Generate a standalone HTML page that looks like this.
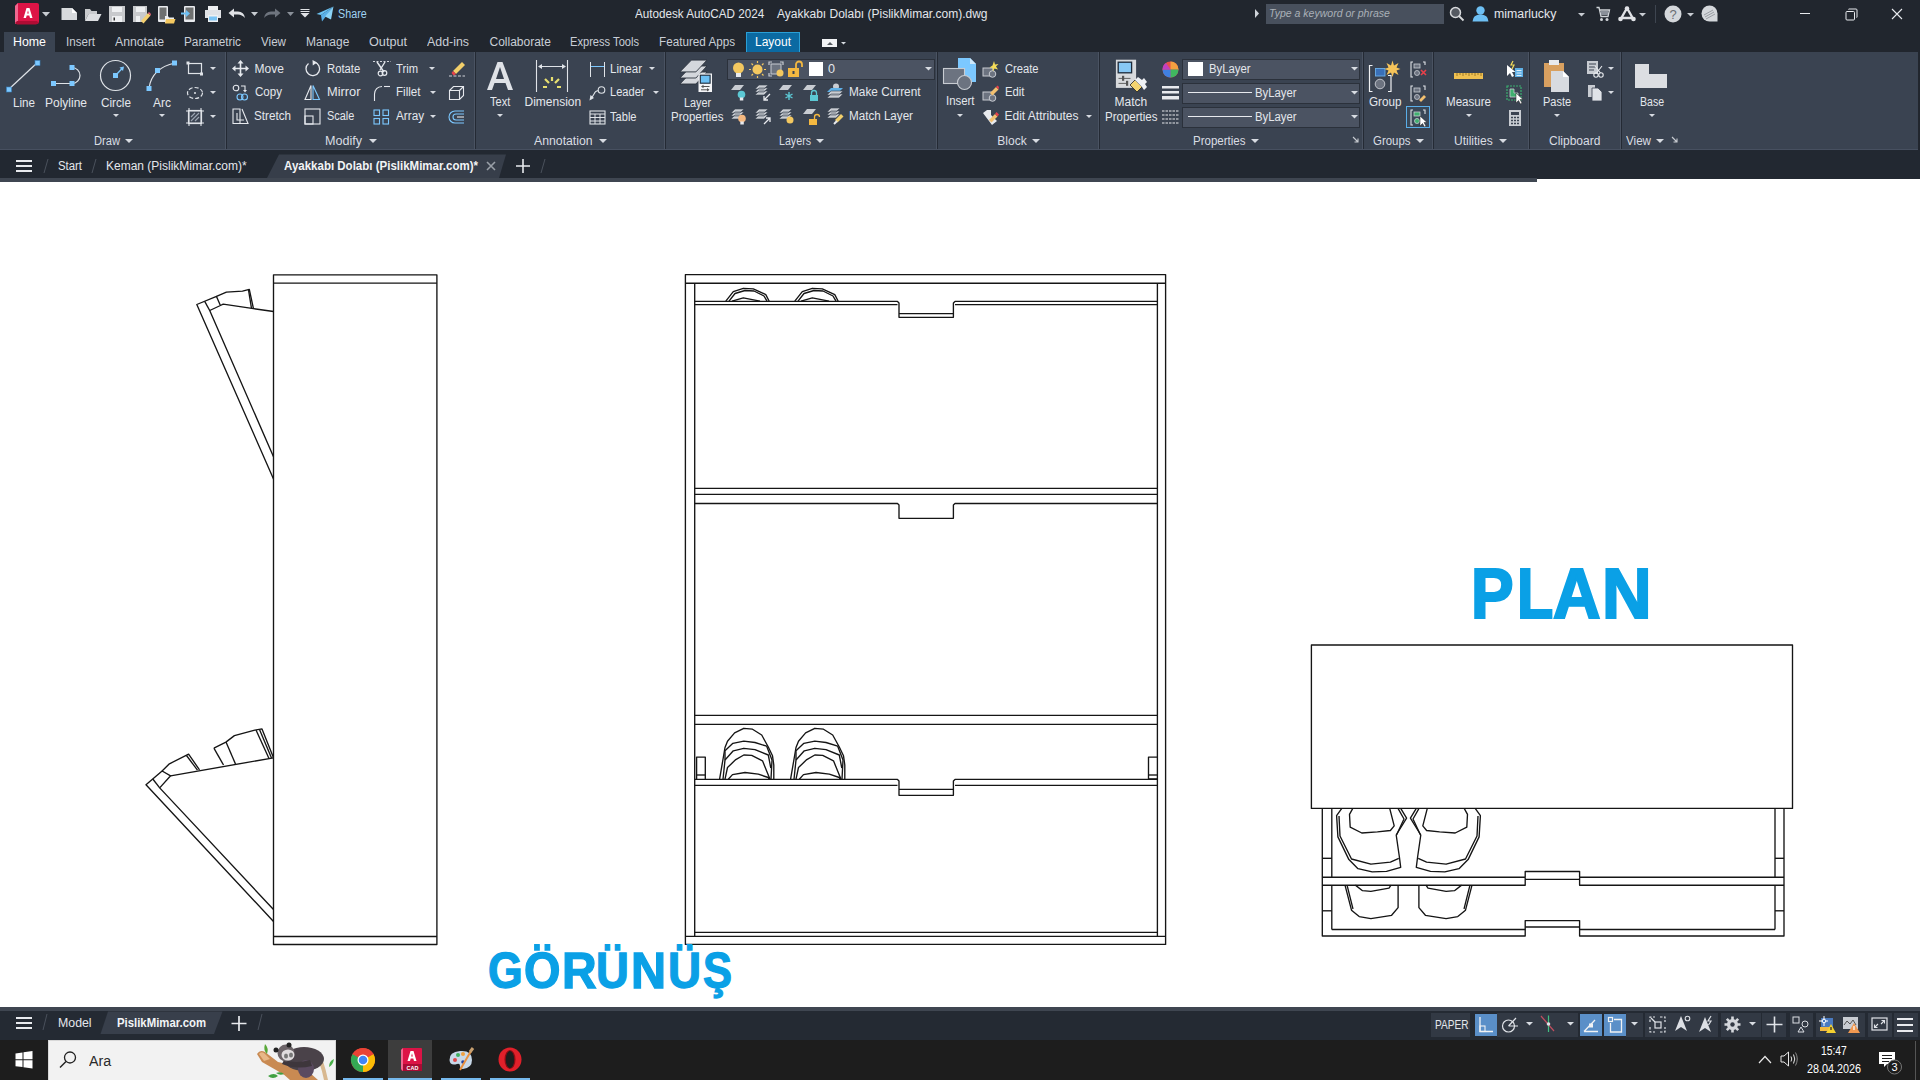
<!DOCTYPE html>
<html><head><meta charset="utf-8">
<style>
*{margin:0;padding:0;box-sizing:border-box}
html,body{width:1920px;height:1080px;overflow:hidden;background:#fff;font-family:"Liberation Sans",sans-serif}
.a{position:absolute}
.t{position:absolute;color:#e6e9ee;font-size:12px;white-space:nowrap;line-height:1}
svg{overflow:visible}
</style></head><body>

<div class="a" style="left:0;top:0;width:1920px;height:52px;background:#21262e"></div>
<div class="a" style="left:0;top:52px;width:1920px;height:98px;background:#3a4351"></div>
<div class="a" style="left:0;top:150px;width:1920px;height:28px;background:#222831"></div>
<div class="a" style="left:0;top:178px;width:1537px;height:4px;background:#3f4651"></div>
<div class="a" style="left:1537px;top:178px;width:383px;height:1px;background:#222831"></div>
<div class="a" style="left:0;top:1007px;width:1920px;height:33px;background:#222831"></div>
<div class="a" style="left:0;top:1007px;width:1920px;height:4px;background:#3f4651"></div>
<div class="a" style="left:0;top:1040px;width:1920px;height:40px;background:#1c1c1c"></div>

<svg class="a" style="left:0;top:0" width="1920" height="1080" viewBox="0 0 1920 1080"><g fill="none" stroke="#151515" stroke-width="1.35" stroke-linejoin="round"><path d="M273.5,274.8 L436.9,274.8 L436.9,944.5 L273.5,944.5 Z"/>
<path d="M273.5,283.1 L436.9,283.1"/>
<path d="M273.5,936.5 L436.9,936.5"/>
<path d="M273.5,478.9 L196.8,304.5 L216.5,296.4 L220.4,305.5 L209.7,310.5 L273.5,456.7"/>
<path d="M204.7,301.4 L209.7,310.5"/>
<path d="M216.5,296.4 L226.4,292.2 L242.5,291.2 L249.3,289.4 L253.4,308.4"/>
<path d="M220.4,305.5 L223.2,304.2 L251.9,308.4 L273.5,311.5"/>
<path d="M248.5,290 L251.5,308.4"/>
<path d="M273.5,921.5 L146.0,784.8 L162.1,771.0 L170.6,775.8 L159.7,787.9 L273.5,909.5"/>
<path d="M152.8,779 L159.7,787.9"/>
<path d="M162.1,771.0 L169.4,763.8 L188.6,754.2 L199.5,769.8"/>
<path d="M170.6,775.8 L273.5,757.8"/>
<path d="M186.5,755.5 L197.5,770.2"/>
<path d="M213.9,748.2 L223.5,765.0"/>
<path d="M213.9,748.2 L225.9,742.1 L234.4,735.6 L254.8,730.1 L262.0,728.9 L273.5,757.8"/>
<path d="M226,742 L235.5,764"/>
<path d="M256,730 L269,758.5"/>
<path d="M259.5,729.5 L271.5,758"/>
<path d="M685.4,274.6 L1165.6,274.6 L1165.6,944.4 L685.4,944.4 Z"/>
<path d="M685.4,283.2 L1165.6,283.2"/>
<path d="M694.7,283.2 L694.7,936.4"/>
<path d="M1157.4,283.2 L1157.4,936.4"/>
<path d="M685.4,936.4 L1165.6,936.4"/>
<path d="M694.7,301.4 L897.5,301.4 L899.0,302.9 L899.0,317.3 L953.4,317.3 L953.4,302.9 L955.0,301.4 L1157.4,301.4"/>
<path d="M694.7,304.59999999999997 L897.5,304.59999999999997"/>
<path d="M955,304.59999999999997 L1157.4,304.59999999999997"/>
<path d="M899,313.6 L953.4,313.6"/>
<path d="M694.7,488.4 L1157.4,488.4"/>
<path d="M694.7,494.3 L1157.4,494.3"/>
<path d="M694.7,503.5 L897.5,503.5 L899.0,505.0 L899.0,518.3 L953.4,518.3 L953.4,505.0 L955.0,503.5 L1157.4,503.5"/>
<path d="M694.7,715.4 L1157.4,715.4"/>
<path d="M694.7,724.4 L1157.4,724.4"/>
<path d="M694.7,779.4 L897.5,779.4 L899.0,780.9 L899.0,795.3 L953.4,795.3 L953.4,780.9 L955.0,779.4 L1157.4,779.4"/>
<path d="M694.7,785.4 L897.5,785.4"/>
<path d="M955,785.4 L1157.4,785.4"/>
<path d="M899,789.4 L953.4,789.4"/>
<path d="M694.7,932.4 L1157.4,932.4"/>
<path d="M696.6,779.0 L696.6,757.1 L705.3,757.1 L705.3,779.0"/>
<path d="M696.6,775 L705.3,775"/>
<path d="M1157.4,779.0 L1148.5,779.0 L1148.5,757.1 L1157.4,757.1"/>
<path d="M1148.5,775 L1157.4,775"/>
<path d="M719.6,779.2 L725.0,747.5 L727.5,741.2 L734.6,732.9 L743.8,728.3 L752.5,729.2 L761.7,735.0 L768.3,747.0 L772.5,755.8 L773.8,765.0 L773.8,779.2"/>
<path d="M723.0,779.2 L725.0,760.0 L725.0,750.8 L732.9,743.3 L743.8,741.2 L755.0,742.5 L766.7,746.2 L772.0,760.0 L771.0,779.2"/>
<path d="M725.0,760.0 L733.3,750.8 L743.8,748.3 L755.0,749.6 L768.3,755.0 L770.8,768.0"/>
<path d="M725.0,779.2 L727.5,767.5 L735.8,759.6 L743.8,755.0 L751.7,755.4 L762.5,760.8 L770.0,779.2"/>
<path d="M728.3,779.2 L732.5,774.6 L745.0,772.5 L758.3,774.2 L768.3,777.5 L769.0,779.2"/>
<path d="M790.6,779.2 L796.0,747.5 L798.5,741.2 L805.6,732.9 L814.8,728.3 L823.5,729.2 L832.7,735.0 L839.3,747.0 L843.5,755.8 L844.8,765.0 L844.8,779.2"/>
<path d="M794.0,779.2 L796.0,760.0 L796.0,750.8 L803.9,743.3 L814.8,741.2 L826.0,742.5 L837.7,746.2 L843.0,760.0 L842.0,779.2"/>
<path d="M796.0,760.0 L804.3,750.8 L814.8,748.3 L826.0,749.6 L839.3,755.0 L841.8,768.0"/>
<path d="M796.0,779.2 L798.5,767.5 L806.8,759.6 L814.8,755.0 L822.7,755.4 L833.5,760.8 L841.0,779.2"/>
<path d="M799.3,779.2 L803.5,774.6 L816.0,772.5 L829.3,774.2 L839.3,777.5 L840.0,779.2"/>
<path d="M725.8,301.2 L733.3,291.7 L743.3,288.3 L753.3,288.8 L765.8,294.6 L769.2,301.2"/>
<path d="M729.0,301.2 L735.0,293.5 L745.0,290.5 L754.0,291.0 L764.0,296.0 L767.0,301.2"/>
<path d="M732.0,301.2 L743.3,297.9 L760.0,301.2"/>
<path d="M794.8,301.2 L802.3,291.7 L812.3,288.3 L822.3,288.8 L834.8,294.6 L838.2,301.2"/>
<path d="M798.0,301.2 L804.0,293.5 L814.0,290.5 L823.0,291.0 L833.0,296.0 L836.0,301.2"/>
<path d="M801.0,301.2 L812.3,297.9 L829.0,301.2"/>
<path d="M1311.4,645.0 L1792.5,645.0 L1792.5,808.4 L1311.4,808.4 Z"/>
<path d="M1322.3,808.4 L1322.3,936.0 L1525.2,936.0 L1525.2,920.6 L1579.6,920.6 L1579.6,936.0 L1784.0,936.0 L1784.0,808.4"/>
<path d="M1331.8,808.4 L1331.8,877.4"/>
<path d="M1331.8,885.1 L1331.8,929.6"/>
<path d="M1775,808.4 L1775,877.4"/>
<path d="M1775,885.1 L1775,929.6"/>
<path d="M1322.3,858.3 L1331.8,858.3"/>
<path d="M1322.3,910.8 L1331.8,910.8"/>
<path d="M1775,858.3 L1784,858.3"/>
<path d="M1775,910.8 L1784,910.8"/>
<path d="M1322.3,877.2 L1525.2,877.2 L1525.2,871.5 L1579.6,871.5 L1579.6,877.2 L1784.0,877.2"/>
<path d="M1322.3,885.2 L1525.2,885.2 L1525.2,877.7"/>
<path d="M1579.6,877.7 L1579.6,885.2 L1784.0,885.2"/>
<path d="M1525.2,879.4 L1579.6,879.4"/>
<path d="M1331.8,929.5 L1525.2,929.5"/>
<path d="M1579.6,929.5 L1775.0,929.5"/>
<path d="M1525.2,927 L1579.6,927"/>
<path d="M1341.8,808.4 L1336.6,815.6 L1337.9,836.9 L1348.9,859.6 L1358.0,868.7 L1372.2,871.9 L1386.5,871.3 L1400.7,867.4 L1399.4,857.0 L1396.2,835.0 L1406.6,818.1 L1400.7,808.4"/>
<path d="M1339.0,816.0 L1340.0,836.0 L1351.5,859.0 L1370.9,864.2 L1390.4,862.2 L1398.8,858.3"/>
<path d="M1352.8,808.4 L1349.5,814.3 L1350.2,827.2 L1361.8,833.0 L1377.4,831.8 L1390.4,830.5 L1394.2,825.9 L1389.7,808.4"/>
<path d="M1396.5,835.0 L1404.0,819.0 L1398.0,808.4"/>
<path d="M1345.0,885.1 L1351.5,910.2 L1359.2,916.6 L1370.9,918.6 L1391.6,915.3 L1398.1,907.6 L1398.1,885.1"/>
<path d="M1347.0,885.1 L1353.0,909.0"/>
<path d="M1355.4,885.1 L1362.5,890.7 L1370.9,891.4 L1389.0,888.1 L1391.0,885.1"/>
<path d="M1475.2,808.4 L1480.4,815.6 L1479.1,836.9 L1468.1,859.6 L1459.0,868.7 L1444.8,871.9 L1430.5,871.3 L1416.3,867.4 L1417.6,857.0 L1420.8,835.0 L1410.4,818.1 L1416.3,808.4"/>
<path d="M1478.0,816.0 L1477.0,836.0 L1465.5,859.0 L1446.1,864.2 L1426.6,862.2 L1418.2,858.3"/>
<path d="M1464.2,808.4 L1467.5,814.3 L1466.8,827.2 L1455.2,833.0 L1439.6,831.8 L1426.6,830.5 L1422.8,825.9 L1427.3,808.4"/>
<path d="M1420.5,835.0 L1413.0,819.0 L1419.0,808.4"/>
<path d="M1472.0,885.1 L1465.5,910.2 L1457.8,916.6 L1446.1,918.6 L1425.4,915.3 L1418.9,907.6 L1418.9,885.1"/>
<path d="M1470.0,885.1 L1464.0,909.0"/>
<path d="M1461.6,885.1 L1454.5,890.7 L1446.1,891.4 L1428.0,888.1 L1426.0,885.1"/></g></svg>
<div class="a" style="left:1470.95px;top:560.19px;font-weight:bold;font-size:69.71px;line-height:1;color:#0aa0e6;-webkit-text-stroke:2.2px #0aa0e6;transform:scaleX(0.916);transform-origin:0 0">P</div>
<div class="a" style="left:1516.64px;top:560.19px;font-weight:bold;font-size:69.71px;line-height:1;color:#0aa0e6;-webkit-text-stroke:2.2px #0aa0e6;transform:scaleX(0.852);transform-origin:0 0">L</div>
<div class="a" style="left:1553.21px;top:560.19px;font-weight:bold;font-size:69.71px;line-height:1;color:#0aa0e6;-webkit-text-stroke:2.2px #0aa0e6;transform:scaleX(0.943);transform-origin:0 0">A</div>
<div class="a" style="left:1601.94px;top:560.19px;font-weight:bold;font-size:69.71px;line-height:1;color:#0aa0e6;-webkit-text-stroke:2.2px #0aa0e6;transform:scaleX(0.985);transform-origin:0 0">N</div>
<div class="a" style="left:487.62px;top:947.42px;font-weight:bold;font-size:49.71px;line-height:1;color:#0aa0e6;-webkit-text-stroke:1.3px #0aa0e6;transform:scaleX(0.896);transform-origin:0 0">G</div>
<div class="a" style="left:523.67px;top:947.42px;font-weight:bold;font-size:49.71px;line-height:1;color:#0aa0e6;-webkit-text-stroke:1.3px #0aa0e6;transform:scaleX(0.944);transform-origin:0 0">Ö</div>
<div class="a" style="left:561.73px;top:947.42px;font-weight:bold;font-size:49.71px;line-height:1;color:#0aa0e6;-webkit-text-stroke:1.3px #0aa0e6;transform:scaleX(0.966);transform-origin:0 0">R</div>
<div class="a" style="left:596.12px;top:947.42px;font-weight:bold;font-size:49.71px;line-height:1;color:#0aa0e6;-webkit-text-stroke:1.3px #0aa0e6;transform:scaleX(0.915);transform-origin:0 0">Ü</div>
<div class="a" style="left:631.49px;top:947.42px;font-weight:bold;font-size:49.71px;line-height:1;color:#0aa0e6;-webkit-text-stroke:1.3px #0aa0e6;transform:scaleX(0.979);transform-origin:0 0">N</div>
<div class="a" style="left:668.10px;top:947.42px;font-weight:bold;font-size:49.71px;line-height:1;color:#0aa0e6;-webkit-text-stroke:1.3px #0aa0e6;transform:scaleX(0.922);transform-origin:0 0">Ü</div>
<div class="a" style="left:703.35px;top:947.42px;font-weight:bold;font-size:49.71px;line-height:1;color:#0aa0e6;-webkit-text-stroke:1.3px #0aa0e6;transform:scaleX(0.875);transform-origin:0 0">Ş</div>
<div class="t" style="left:635.4px;top:7.54px;font-size:12px;color:#e4e7ec;transform:scaleX(0.973);transform-origin:0 0;">Autodesk AutoCAD 2024</div>
<div class="t" style="left:777.0px;top:7.54px;font-size:12px;color:#e4e7ec;">Ayakkabı Dolabı (PislikMimar.com).dwg</div>
<svg class="a" style="left:1254px;top:9px;" width="6" height="10" viewBox="0 0 6 10"><path d="M1,0 L5,4.5 L1,9 Z" fill="#d0d4da"/></svg>
<div class="a" style="left:1266px;top:4px;width:178px;height:20px;background:#48505d;"></div>
<div class="t" style="left:1268.5px;top:8.19px;font-size:11px;color:#aab0b8;font-style:italic;transform:scaleX(0.957);transform-origin:0 0;">Type a keyword or phrase</div>
<div class="a" style="left:4px;top:32px;width:51px;height:20px;background:#3a4351;"></div>
<div class="t" style="left:13.0px;top:35.84px;font-size:12px;color:#ffffff;transform:scaleX(1.031);transform-origin:0 0;">Home</div>
<div class="t" style="left:66.0px;top:35.84px;font-size:12px;color:#c9ced6;transform:scaleX(0.967);transform-origin:0 0;">Insert</div>
<div class="t" style="left:115.0px;top:35.84px;font-size:12px;color:#c9ced6;transform:scaleX(1.021);transform-origin:0 0;">Annotate</div>
<div class="t" style="left:184.0px;top:35.84px;font-size:12px;color:#c9ced6;transform:scaleX(0.982);transform-origin:0 0;">Parametric</div>
<div class="t" style="left:261.0px;top:35.84px;font-size:12px;color:#c9ced6;transform:scaleX(0.969);transform-origin:0 0;">View</div>
<div class="t" style="left:306.0px;top:35.84px;font-size:12px;color:#c9ced6;">Manage</div>
<div class="t" style="left:369.0px;top:35.84px;font-size:12px;color:#c9ced6;transform:scaleX(1.056);transform-origin:0 0;">Output</div>
<div class="t" style="left:427.0px;top:35.84px;font-size:12px;color:#c9ced6;transform:scaleX(1.032);transform-origin:0 0;">Add-ins</div>
<div class="t" style="left:489.5px;top:35.84px;font-size:12px;color:#c9ced6;">Collaborate</div>
<div class="t" style="left:570.0px;top:35.84px;font-size:12px;color:#c9ced6;transform:scaleX(0.927);transform-origin:0 0;">Express Tools</div>
<div class="t" style="left:659.0px;top:35.84px;font-size:12px;color:#c9ced6;transform:scaleX(0.974);transform-origin:0 0;">Featured Apps</div>
<div class="a" style="left:746px;top:32px;width:54px;height:20px;background:#0b6aa2;border:1px solid #2a9fd6;border-bottom:none;"></div>
<div class="t" style="left:755.0px;top:35.84px;font-size:12px;color:#ffffff;">Layout</div>
<div class="a" style="left:822px;top:39px;width:15px;height:8px;background:#f2f3f5;"></div>
<svg class="a" style="left:826.5px;top:41.5px;" width="6" height="3" viewBox="0 0 6 3"><path d="M0,3 L3,0 L6,3Z" fill="#555a60"/></svg>
<svg class="a" style="left:841.0px;top:41.5px" width="5.0" height="3.0" viewBox="0 0 5.0 3.0"><path d="M0,0 L5.0,0 L2.5,2.5 Z" fill="#d8dce2"/></svg>
<div class="a" style="left:225px;top:52px;width:1px;height:98px;background:#4a5362;"></div>
<div class="a" style="left:226px;top:52px;width:1px;height:98px;background:#242a34;"></div>
<div class="a" style="left:474px;top:52px;width:1px;height:98px;background:#4a5362;"></div>
<div class="a" style="left:475px;top:52px;width:1px;height:98px;background:#242a34;"></div>
<div class="a" style="left:664px;top:52px;width:1px;height:98px;background:#4a5362;"></div>
<div class="a" style="left:665px;top:52px;width:1px;height:98px;background:#242a34;"></div>
<div class="a" style="left:936px;top:52px;width:1px;height:98px;background:#4a5362;"></div>
<div class="a" style="left:937px;top:52px;width:1px;height:98px;background:#242a34;"></div>
<div class="a" style="left:1098px;top:52px;width:1px;height:98px;background:#4a5362;"></div>
<div class="a" style="left:1099px;top:52px;width:1px;height:98px;background:#242a34;"></div>
<div class="a" style="left:1362px;top:52px;width:1px;height:98px;background:#4a5362;"></div>
<div class="a" style="left:1363px;top:52px;width:1px;height:98px;background:#242a34;"></div>
<div class="a" style="left:1432px;top:52px;width:1px;height:98px;background:#4a5362;"></div>
<div class="a" style="left:1433px;top:52px;width:1px;height:98px;background:#242a34;"></div>
<div class="a" style="left:1528px;top:52px;width:1px;height:98px;background:#4a5362;"></div>
<div class="a" style="left:1529px;top:52px;width:1px;height:98px;background:#242a34;"></div>
<div class="a" style="left:1620px;top:52px;width:1px;height:98px;background:#4a5362;"></div>
<div class="a" style="left:1621px;top:52px;width:1px;height:98px;background:#242a34;"></div>
<div class="a" style="left:0px;top:149px;width:1920px;height:1px;background:#475060;"></div>
<div class="a" style="left:1918px;top:52px;width:2px;height:98px;background:#21262e;"></div>
<div class="t" style="left:93.8px;top:135.04px;font-size:12px;color:#d9dde3;transform:scaleX(0.928);transform-origin:0 0;">Draw</div>
<svg class="a" style="left:125.0px;top:139.0px" width="8" height="4.5" viewBox="0 0 8 4.5"><path d="M0,0 L8,0 L4,4 Z" fill="#d8dce2"/></svg>
<div class="t" style="left:325.3px;top:135.04px;font-size:12px;color:#d9dde3;transform:scaleX(1.047);transform-origin:0 0;">Modify</div>
<svg class="a" style="left:369.0px;top:139.0px" width="8" height="4.5" viewBox="0 0 8 4.5"><path d="M0,0 L8,0 L4,4 Z" fill="#d8dce2"/></svg>
<div class="t" style="left:533.6px;top:135.04px;font-size:12px;color:#d9dde3;transform:scaleX(1.022);transform-origin:0 0;">Annotation</div>
<svg class="a" style="left:599.0px;top:139.0px" width="8" height="4.5" viewBox="0 0 8 4.5"><path d="M0,0 L8,0 L4,4 Z" fill="#d8dce2"/></svg>
<div class="t" style="left:778.5px;top:135.04px;font-size:12px;color:#d9dde3;transform:scaleX(0.889);transform-origin:0 0;">Layers</div>
<svg class="a" style="left:816.0px;top:139.0px" width="8" height="4.5" viewBox="0 0 8 4.5"><path d="M0,0 L8,0 L4,4 Z" fill="#d8dce2"/></svg>
<div class="t" style="left:997.3px;top:135.04px;font-size:12px;color:#d9dde3;">Block</div>
<svg class="a" style="left:1032.0px;top:139.0px" width="8" height="4.5" viewBox="0 0 8 4.5"><path d="M0,0 L8,0 L4,4 Z" fill="#d8dce2"/></svg>
<div class="t" style="left:1192.5px;top:135.04px;font-size:12px;color:#d9dde3;transform:scaleX(0.960);transform-origin:0 0;">Properties</div>
<svg class="a" style="left:1251.0px;top:139.0px" width="8" height="4.5" viewBox="0 0 8 4.5"><path d="M0,0 L8,0 L4,4 Z" fill="#d8dce2"/></svg>
<div class="t" style="left:1372.5px;top:135.04px;font-size:12px;color:#d9dde3;transform:scaleX(0.953);transform-origin:0 0;">Groups</div>
<svg class="a" style="left:1416.0px;top:139.0px" width="8" height="4.5" viewBox="0 0 8 4.5"><path d="M0,0 L8,0 L4,4 Z" fill="#d8dce2"/></svg>
<div class="t" style="left:1454.0px;top:135.04px;font-size:12px;color:#d9dde3;">Utilities</div>
<svg class="a" style="left:1499.0px;top:139.0px" width="8" height="4.5" viewBox="0 0 8 4.5"><path d="M0,0 L8,0 L4,4 Z" fill="#d8dce2"/></svg>
<div class="t" style="left:1549.0px;top:135.04px;font-size:12px;color:#d9dde3;">Clipboard</div>
<div class="t" style="left:1626.0px;top:135.04px;font-size:12px;color:#d9dde3;transform:scaleX(0.969);transform-origin:0 0;">View</div>
<svg class="a" style="left:1656.0px;top:139.0px" width="8" height="4.5" viewBox="0 0 8 4.5"><path d="M0,0 L8,0 L4,4 Z" fill="#d8dce2"/></svg>
<svg class="a" style="left:1352px;top:136px;" width="7" height="7" viewBox="0 0 7 7"><path d="M1,1 L6,6 M6,2.5 L6,6 L2.5,6" stroke="#c8ccd2" stroke-width="1.1" fill="none"/></svg>
<svg class="a" style="left:1671px;top:136px;" width="7" height="7" viewBox="0 0 7 7"><path d="M1,1 L6,6 M6,2.5 L6,6 L2.5,6" stroke="#c8ccd2" stroke-width="1.1" fill="none"/></svg>
<div class="t" style="left:12.5px;top:96.74px;font-size:12px;color:#e4e7ec;transform:scaleX(0.970);transform-origin:0 0;">Line</div>
<div class="t" style="left:45.0px;top:96.74px;font-size:12px;color:#e4e7ec;">Polyline</div>
<div class="t" style="left:101.0px;top:96.74px;font-size:12px;color:#e4e7ec;transform:scaleX(0.978);transform-origin:0 0;">Circle</div>
<div class="t" style="left:153.0px;top:96.74px;font-size:12px;color:#e4e7ec;">Arc</div>
<svg class="a" style="left:112.5px;top:113.5px" width="6" height="3.5" viewBox="0 0 6 3.5"><path d="M0,0 L6,0 L3,3 Z" fill="#d8dce2"/></svg>
<svg class="a" style="left:158.5px;top:113.5px" width="6" height="3.5" viewBox="0 0 6 3.5"><path d="M0,0 L6,0 L3,3 Z" fill="#d8dce2"/></svg>
<svg class="a" style="left:5px;top:59px;" width="36" height="34" viewBox="0 0 36 34"><path d="M3.5,30.5 L32.5,3.5" stroke="#dfe3e8" stroke-width="1.2"/><rect x="1.5" y="28" width="5" height="5" fill="#7cc8ff" stroke="#3a82c0" stroke-width="0.6"/><rect x="30" y="1.5" width="5" height="5" fill="#7cc8ff" stroke="#3a82c0" stroke-width="0.6"/></svg>
<svg class="a" style="left:48px;top:64px;" width="38" height="24" viewBox="0 0 38 24"><path d="M6.5,19.5 L24,19.5 M24,19.5 A8,8 0 0 0 24,3.5" stroke="#dfe3e8" stroke-width="1.2" fill="none"/><rect x="3" y="17" width="5" height="5" fill="#7cc8ff"/><rect x="21.5" y="17" width="5" height="5" fill="#7cc8ff"/><rect x="21.5" y="1" width="5" height="5" fill="#7cc8ff"/></svg>
<svg class="a" style="left:99px;top:59px;" width="34" height="34" viewBox="0 0 34 34"><circle cx="16.5" cy="16.5" r="15" stroke="#dfe3e8" stroke-width="1.2" fill="none"/><path d="M16.5,16.5 L24,8.5" stroke="#7cc8ff" stroke-width="1.3"/><path d="M20.5,8.5 L25,7.5 L24,12Z" fill="#7cc8ff"/><rect x="14" y="14" width="5" height="5" fill="#7cc8ff"/></svg>
<svg class="a" style="left:146px;top:60px;" width="34" height="32" viewBox="0 0 34 32"><path d="M3,28 Q6,8 29,3" stroke="#dfe3e8" stroke-width="1.2" fill="none"/><rect x="0.5" y="26" width="5" height="5" fill="#7cc8ff"/><rect x="9" y="8" width="5" height="5" fill="#7cc8ff"/><rect x="26" y="0.5" width="5" height="5" fill="#7cc8ff"/></svg>
<svg class="a" style="left:186px;top:61px;" width="18" height="16" viewBox="0 0 18 16"><rect x="2.5" y="2.5" width="13" height="10" stroke="#dfe3e8" stroke-width="1.2" fill="none"/><rect x="0.5" y="0.5" width="3" height="3" fill="#dfe3e8"/><rect x="14" y="11.5" width="3" height="3" fill="#dfe3e8"/></svg>
<svg class="a" style="left:209.5px;top:66.5px" width="6" height="3.5" viewBox="0 0 6 3.5"><path d="M0,0 L6,0 L3,3 Z" fill="#d8dce2"/></svg>
<svg class="a" style="left:186px;top:86px;" width="18" height="14" viewBox="0 0 18 14"><ellipse cx="9" cy="7" rx="7.5" ry="5.5" stroke="#dfe3e8" stroke-width="1.2" fill="none" stroke-dasharray="4 2"/><circle cx="9" cy="7" r="1" fill="#dfe3e8"/></svg>
<svg class="a" style="left:209.5px;top:90.5px" width="6" height="3.5" viewBox="0 0 6 3.5"><path d="M0,0 L6,0 L3,3 Z" fill="#d8dce2"/></svg>
<svg class="a" style="left:186px;top:108px;" width="18" height="18" viewBox="0 0 18 18"><rect x="2.5" y="2.5" width="13" height="13" stroke="#dfe3e8" stroke-width="1.2" fill="none"/><path d="M0,3 L18,3 M0,15 L18,15 M3,0 L3,18 M15,0 L15,18" stroke="#dfe3e8" stroke-width="1.1"/><path d="M5,13 L13,5 M5,9 L9,5 M9,13 L13,9" stroke="#9aa3b0" stroke-width="1.2"/></svg>
<svg class="a" style="left:209.5px;top:114.5px" width="6" height="3.5" viewBox="0 0 6 3.5"><path d="M0,0 L6,0 L3,3 Z" fill="#d8dce2"/></svg>
<div class="t" style="left:254.5px;top:62.84px;font-size:12px;color:#e4e7ec;">Move</div>
<div class="t" style="left:326.6px;top:62.84px;font-size:12px;color:#e4e7ec;transform:scaleX(0.939);transform-origin:0 0;">Rotate</div>
<div class="t" style="left:395.6px;top:62.84px;font-size:12px;color:#e4e7ec;transform:scaleX(0.934);transform-origin:0 0;">Trim</div>
<div class="t" style="left:254.5px;top:86.34px;font-size:12px;color:#e4e7ec;transform:scaleX(0.964);transform-origin:0 0;">Copy</div>
<div class="t" style="left:326.6px;top:86.34px;font-size:12px;color:#e4e7ec;transform:scaleX(1.069);transform-origin:0 0;">Mirror</div>
<div class="t" style="left:395.6px;top:86.34px;font-size:12px;color:#e4e7ec;transform:scaleX(0.967);transform-origin:0 0;">Fillet</div>
<div class="t" style="left:254.0px;top:110.24px;font-size:12px;color:#e4e7ec;transform:scaleX(0.974);transform-origin:0 0;">Stretch</div>
<div class="t" style="left:326.6px;top:110.24px;font-size:12px;color:#e4e7ec;transform:scaleX(0.906);transform-origin:0 0;">Scale</div>
<div class="t" style="left:395.6px;top:110.24px;font-size:12px;color:#e4e7ec;transform:scaleX(0.977);transform-origin:0 0;">Array</div>
<svg class="a" style="left:428.5px;top:66.5px" width="6" height="3.5" viewBox="0 0 6 3.5"><path d="M0,0 L6,0 L3,3 Z" fill="#d8dce2"/></svg>
<svg class="a" style="left:430.0px;top:90.5px" width="6" height="3.5" viewBox="0 0 6 3.5"><path d="M0,0 L6,0 L3,3 Z" fill="#d8dce2"/></svg>
<svg class="a" style="left:430.0px;top:114.5px" width="6" height="3.5" viewBox="0 0 6 3.5"><path d="M0,0 L6,0 L3,3 Z" fill="#d8dce2"/></svg>
<svg class="a" style="left:232px;top:60px;" width="17" height="17" viewBox="0 0 17 17"><path d="M8.5,2 L8.5,15 M2,8.5 L15,8.5" stroke="#e6e9ee" stroke-width="1.6"/><path d="M8.5,0 L11.5,3.5 L5.5,3.5Z M8.5,17 L11.5,13.5 L5.5,13.5Z M0,8.5 L3.5,5.5 L3.5,11.5Z M17,8.5 L13.5,5.5 L13.5,11.5Z" fill="#e6e9ee"/></svg>
<svg class="a" style="left:304px;top:60px;" width="17" height="17" viewBox="0 0 17 17"><path d="M10.5,2.2 A6.8,6.8 0 1 1 4.5,3.5" stroke="#e6e9ee" stroke-width="1.3" fill="none"/><path d="M8.5,0 L13,2.6 L8.8,5.5Z" fill="#e6e9ee"/></svg>
<svg class="a" style="left:373px;top:60px;" width="18" height="17" viewBox="0 0 18 17"><path d="M0,1.5 L18,1.5" stroke="#d0d4da" stroke-width="1" stroke-dasharray="2 1.5"/><path d="M4,2 L11,12 M12,2 L7,10" stroke="#e6e9ee" stroke-width="1.4"/><circle cx="7.5" cy="13.5" r="2.3" stroke="#e6e9ee" stroke-width="1.2" fill="none"/><circle cx="11.5" cy="13" r="2.3" stroke="#e6e9ee" stroke-width="1.2" fill="none"/></svg>
<svg class="a" style="left:448px;top:60px;" width="18" height="17" viewBox="0 0 18 17"><path d="M5,11 L14,2 L17,5 L8,14Z" fill="#f2cf6a"/><path d="M5,11 L8,14 L5.5,15.5 L3.5,13Z" fill="#e8404a"/><path d="M1,16 L17,16" stroke="#d0d4da" stroke-width="1" stroke-dasharray="3 1.5"/></svg>
<svg class="a" style="left:232px;top:84px;" width="17" height="17" viewBox="0 0 17 17"><circle cx="4" cy="4" r="2.8" stroke="#e6e9ee" stroke-width="1.1" fill="none"/><path d="M9,2 L13,2 L13,7" stroke="#e6e9ee" stroke-width="1.1" fill="none"/><path d="M11,6 L13,8.5 L15,6Z" fill="#e6e9ee"/><circle cx="8" cy="13" r="3" stroke="#7cc8ff" stroke-width="1.1" fill="none"/><circle cx="12.5" cy="13" r="3" stroke="#7cc8ff" stroke-width="1.1" fill="none"/></svg>
<svg class="a" style="left:304px;top:84px;" width="17" height="17" viewBox="0 0 17 17"><path d="M7,1.5 L1,15.5 L7,15.5Z" stroke="#e6e9ee" stroke-width="1.1" fill="none"/><path d="M9,1.5 L15.5,15.5 L9,15.5Z" stroke="#7cc8ff" stroke-width="1.1" fill="none"/></svg>
<svg class="a" style="left:373px;top:85px;" width="17" height="17" viewBox="0 0 17 17"><path d="M1.5,16 L1.5,9 Q2,2 9,1.5" stroke="#e6e9ee" stroke-width="1.1" fill="none"/><path d="M11,1.5 L17,1.5" stroke="#e6e9ee" stroke-width="1.1"/></svg>
<svg class="a" style="left:232px;top:108px;" width="17" height="17" viewBox="0 0 17 17"><path d="M1,1 L8,1 L8,15.5 L1,15.5Z" stroke="#e6e9ee" stroke-width="1.1" fill="none"/><path d="M10,1 L16,15.5 L8,15.5" stroke="#e6e9ee" stroke-width="1.1" fill="none"/><path d="M5,5 L5,12 L12,12" stroke="#e6e9ee" stroke-width="1.1" fill="none"/></svg>
<svg class="a" style="left:304px;top:108px;" width="17" height="17" viewBox="0 0 17 17"><rect x="1" y="1" width="15" height="15" stroke="#e6e9ee" stroke-width="1.1" fill="none"/><rect x="1" y="8" width="8" height="8" stroke="#e6e9ee" stroke-width="1.1" fill="none"/></svg>
<svg class="a" style="left:373px;top:109px;" width="17" height="16" viewBox="0 0 17 16"><rect x="1" y="1" width="5.5" height="5.5" stroke="#7cc8ff" stroke-width="1.1" fill="none"/><rect x="10" y="1" width="5.5" height="5.5" stroke="#7cc8ff" stroke-width="1.1" fill="none"/><rect x="1" y="9.5" width="5.5" height="5.5" stroke="#7cc8ff" stroke-width="1.1" fill="none"/><rect x="10" y="9.5" width="5.5" height="5.5" stroke="#7cc8ff" stroke-width="1.1" fill="none"/></svg>
<svg class="a" style="left:448px;top:85px;" width="17" height="16" viewBox="0 0 17 16"><path d="M1.5,5.5 L5.5,1.5 L15.5,1.5 L15.5,10.5 L11.5,14.5 L1.5,14.5Z M1.5,5.5 L11.5,5.5 L11.5,14.5 M11.5,5.5 L15.5,1.5" stroke="#e6e9ee" stroke-width="1.1" fill="none"/></svg>
<svg class="a" style="left:448px;top:109px;" width="17" height="16" viewBox="0 0 17 16"><path d="M16,2 L7,2 A6,6 0 0 0 7,14 L16,14 M16,5 L8,5 A3,3 0 0 0 8,11 L16,11" stroke="#7cc8ff" stroke-width="1.1" fill="none"/><path d="M16,8 L9,8" stroke="#e6e9ee" stroke-width="1.1"/></svg>
<div class="t" style="left:489.6px;top:96.34px;font-size:12px;color:#e4e7ec;transform:scaleX(0.918);transform-origin:0 0;">Text</div>
<div class="t" style="left:524.5px;top:96.34px;font-size:12px;color:#e4e7ec;">Dimension</div>
<svg class="a" style="left:496.6px;top:113.5px" width="6" height="3.5" viewBox="0 0 6 3.5"><path d="M0,0 L6,0 L3,3 Z" fill="#d8dce2"/></svg>
<div class="t" style="left:610.3px;top:63.04px;font-size:12px;color:#e4e7ec;transform:scaleX(0.959);transform-origin:0 0;">Linear</div>
<div class="t" style="left:610.3px;top:86.24px;font-size:12px;color:#e4e7ec;transform:scaleX(0.923);transform-origin:0 0;">Leader</div>
<div class="t" style="left:610.3px;top:110.54px;font-size:12px;color:#e4e7ec;transform:scaleX(0.924);transform-origin:0 0;">Table</div>
<svg class="a" style="left:649.3px;top:66.5px" width="6" height="3.5" viewBox="0 0 6 3.5"><path d="M0,0 L6,0 L3,3 Z" fill="#d8dce2"/></svg>
<svg class="a" style="left:652.5px;top:90.5px" width="6" height="3.5" viewBox="0 0 6 3.5"><path d="M0,0 L6,0 L3,3 Z" fill="#d8dce2"/></svg>
<svg class="a" style="left:486px;top:61px;" width="28" height="30" viewBox="0 0 28 30"><path d="M1,29 L11.5,1 L16.5,1 L27,29 L22,29 L19.5,22 L8.5,22 L6,29Z M10,18 L18,18 L14,6Z" fill="#dfe2e7" fill-rule="evenodd"/></svg>
<svg class="a" style="left:535px;top:59px;" width="34" height="34" viewBox="0 0 34 34"><path d="M1.5,1 L1.5,33 M32.5,1 L32.5,33 M4,7.5 L30,7.5" stroke="#dfe3e8" stroke-width="1.1" fill="none"/><path d="M3,7.5 L7,5 L7,10Z M31,7.5 L27,5 L27,10Z" fill="#dfe3e8"/><path d="M17,18 L17,22 M10,20 L14,24 M24,20 L20,24 M8,28 L12,28 M26,28 L22,28" stroke="#e8e070" stroke-width="2.2"/></svg>
<svg class="a" style="left:589px;top:62px;" width="17" height="15" viewBox="0 0 17 15"><path d="M1.5,0 L1.5,15 M15.5,0 L15.5,15" stroke="#dfe3e8" stroke-width="1"/><path d="M2,4.5 L15,4.5" stroke="#7cc8ff" stroke-width="1"/></svg>
<svg class="a" style="left:589px;top:85px;" width="17" height="16" viewBox="0 0 17 16"><circle cx="12.5" cy="5" r="3.3" stroke="#dfe3e8" stroke-width="1.1" fill="none"/><path d="M9.3,5.5 Q6,6 5,9 L2,14" stroke="#dfe3e8" stroke-width="1.1" fill="none"/><path d="M0.5,15.5 L1.5,10 L5,13Z" fill="#dfe3e8"/></svg>
<svg class="a" style="left:589px;top:110px;" width="17" height="15" viewBox="0 0 17 15"><rect x="1" y="1" width="15" height="13" stroke="#dfe3e8" stroke-width="1.1" fill="none"/><path d="M1,4 L16,4 M1,7.5 L16,7.5 M1,11 L16,11 M6,4 L6,14 M11,4 L11,14" stroke="#dfe3e8" stroke-width="1"/></svg>
<div class="t" style="left:683.7px;top:96.54px;font-size:12px;color:#e4e7ec;transform:scaleX(0.900);transform-origin:0 0;">Layer</div>
<div class="t" style="left:670.6px;top:111.14px;font-size:12px;color:#e4e7ec;transform:scaleX(0.958);transform-origin:0 0;">Properties</div>
<svg class="a" style="left:679px;top:59px;" width="34" height="34" viewBox="0 0 34 34"><g fill="#d4d7dc" stroke="#2c333d" stroke-width="0.9"><path d="M0.9,25 L12.4,13 L28,13 L16.9,25Z"/><path d="M0.9,19 L12.4,7 L28,7 L16.9,19Z"/><path d="M0.9,12.9 L12.4,1.1 L28,1.1 L16.9,12.9Z"/></g><rect x="19.5" y="14.5" width="13.5" height="18.5" fill="#f4f5f7"/><rect x="21.3" y="16.2" width="9.8" height="8" fill="#6cc0f4" stroke="#1c2a3a" stroke-width="1.1"/><path d="M23,27.5 L30.5,27.5 M22,30.8 L29.5,30.8" stroke="#555" stroke-width="1"/><path d="M22,27.5 L24.5,25.8 L24.5,29.2Z M30.5,30.8 L28,29.1 L28,32.5Z" fill="#555"/></svg>
<div class="a" style="left:727px;top:58.5px;width:208px;height:21px;background:#4b5362;border:1px solid #2b313b;"></div>
<svg class="a" style="left:732px;top:62px;" width="13" height="16" viewBox="0 0 13 16"><circle cx="6.5" cy="6" r="5.5" fill="#f4c860"/><rect x="4" y="11" width="5" height="4" fill="#e8eaee"/></svg>
<svg class="a" style="left:749px;top:61px;" width="17" height="17" viewBox="0 0 17 17"><circle cx="8.5" cy="8.5" r="5" fill="#f4c860"/><path d="M8.5,0 L8.5,2 M8.5,15 L8.5,17 M0,8.5 L2,8.5 M15,8.5 L17,8.5 M2.5,2.5 L4,4 M13,13 L14.5,14.5 M2.5,14.5 L4,13 M13,4 L14.5,2.5" stroke="#f4c860" stroke-width="1.2"/></svg>
<svg class="a" style="left:768px;top:61px;" width="17" height="17" viewBox="0 0 17 17"><path d="M1,4 L1,1 L4,1 M12,1 L15,1 L15,4 M1,12 L1,15 L4,15" stroke="#c8ccd2" stroke-width="1.2" fill="none"/><rect x="3" y="3" width="10" height="10" fill="#6c7380" stroke="#c8ccd2" stroke-width="1"/><circle cx="12" cy="12" r="3.5" fill="#f4c860"/></svg>
<svg class="a" style="left:787px;top:60px;" width="17" height="18" viewBox="0 0 17 18"><rect x="1" y="8" width="11" height="9" fill="#f4b840"/><path d="M9,8 L9,4.5 A3,3 0 0 1 15,4.5 L15,7" stroke="#f4b840" stroke-width="1.8" fill="none"/><rect x="5.5" y="11" width="2" height="3" fill="#3a4351"/></svg>
<div class="a" style="left:809px;top:62px;width:14px;height:14px;background:#ffffff;"></div>
<div class="t" style="left:828.0px;top:63.34px;font-size:12px;color:#e4e7ec;transform:scaleX(1.049);transform-origin:0 0;">0</div>
<svg class="a" style="left:925.2px;top:67.0px" width="7.0" height="4.0" viewBox="0 0 7.0 4.0"><path d="M0,0 L7.0,0 L3.5,3.5 Z" fill="#d8dce2"/></svg>
<svg class="a" style="left:730px;top:84px;" width="17" height="18" viewBox="0 0 17 18"><path d="M1,6 L5,1 L14,1 L10,6Z" fill="#c8ccd2"/><circle cx="11.5" cy="10.5" r="3.8" fill="#5cc8d4"/><rect x="9.8" y="13.5" width="3.5" height="3" fill="#e8eaee"/></svg>
<svg class="a" style="left:754px;top:84px;" width="17" height="18" viewBox="0 0 17 18"><path d="M1,5 L5,1 L14,1 L10,5Z M1,8 L5,4 L14,4 L10,8Z M1,11 L5,7 L14,7 L10,11Z" fill="#c8ccd2" stroke="#3a4351" stroke-width="0.6"/><path d="M16,10 L10,16 M10,12 L10,16 L14,16" stroke="#e8eaee" stroke-width="1.3" fill="none"/></svg>
<svg class="a" style="left:778px;top:84px;" width="17" height="18" viewBox="0 0 17 18"><path d="M1,6 L5,1 L14,1 L10,6Z" fill="#c8ccd2"/><path d="M11,8 L11,16 M7.5,10 L14.5,14 M7.5,14 L14.5,10" stroke="#5cc8d4" stroke-width="1.4"/></svg>
<svg class="a" style="left:802px;top:84px;" width="17" height="18" viewBox="0 0 17 18"><path d="M1,6 L5,1 L14,1 L10,6Z" fill="#c8ccd2"/><rect x="8" y="11" width="8" height="6" fill="#5cc8d4"/><path d="M9.5,11 L9.5,9 A2.5,2.5 0 0 1 14.5,9 L14.5,11" stroke="#5cc8d4" stroke-width="1.3" fill="none"/></svg>
<svg class="a" style="left:826px;top:83px;" width="18" height="18" viewBox="0 0 18 18"><circle cx="10" cy="3.5" r="3" fill="#c8ccd2"/><path d="M1,9 L5,5 L17,5 L13,9Z" fill="#5fb0e6"/><path d="M1,12 L5,8 L17,8 L13,12Z M1,15 L5,11 L17,11 L13,15Z" fill="#c8ccd2" stroke="#3a4351" stroke-width="0.6"/></svg>
<div class="t" style="left:848.5px;top:86.34px;font-size:12px;color:#e4e7ec;transform:scaleX(0.984);transform-origin:0 0;">Make Current</div>
<svg class="a" style="left:730px;top:108px;" width="17" height="18" viewBox="0 0 17 18"><path d="M1,5 L5,1 L14,1 L10,5Z M1,8 L5,4 L14,4 L10,8Z M1,11 L5,7 L14,7 L10,11Z" fill="#c8ccd2" stroke="#3a4351" stroke-width="0.6"/><circle cx="12" cy="10.5" r="3.8" fill="#f4b880"/><rect x="10.3" y="13.5" width="3.5" height="3" fill="#e8eaee"/></svg>
<svg class="a" style="left:754px;top:108px;" width="17" height="18" viewBox="0 0 17 18"><path d="M1,5 L5,1 L14,1 L10,5Z M1,8 L5,4 L14,4 L10,8Z M1,11 L5,7 L14,7 L10,11Z" fill="#c8ccd2" stroke="#3a4351" stroke-width="0.6"/><path d="M10,16 L16,10 M12,10 L16,10 L16,14" stroke="#e8eaee" stroke-width="1.3" fill="none"/></svg>
<svg class="a" style="left:778px;top:108px;" width="17" height="18" viewBox="0 0 17 18"><path d="M1,5 L5,1 L14,1 L10,5Z M1,8 L5,4 L14,4 L10,8Z M1,11 L5,7 L14,7 L10,11Z" fill="#c8ccd2" stroke="#3a4351" stroke-width="0.6"/><circle cx="12" cy="12" r="3.5" fill="#f4c860"/></svg>
<svg class="a" style="left:802px;top:108px;" width="17" height="18" viewBox="0 0 17 18"><path d="M1,6 L5,1 L14,1 L10,6Z" fill="#c8ccd2"/><rect x="7" y="11" width="8" height="6" fill="#f4b840"/><path d="M12.5,11 L12.5,9 A2.5,2.5 0 0 1 17.5,9" stroke="#f4b840" stroke-width="1.3" fill="none"/></svg>
<svg class="a" style="left:826px;top:107px;" width="18" height="19" viewBox="0 0 18 19"><path d="M1,5 L5,1 L14,1 L10,5Z M1,8 L5,4 L14,4 L10,8Z M1,11 L5,7 L14,7 L10,11Z" fill="#c8ccd2" stroke="#3a4351" stroke-width="0.6"/><path d="M9,13 L15,7 L17.5,9.5 L11.5,15.5Z" fill="#f2cf6a"/><path d="M8,17 L11,14" stroke="#e8eaee" stroke-width="2"/></svg>
<div class="t" style="left:848.5px;top:110.34px;font-size:12px;color:#e4e7ec;transform:scaleX(0.969);transform-origin:0 0;">Match Layer</div>
<div class="t" style="left:945.5px;top:95.34px;font-size:12px;color:#e4e7ec;transform:scaleX(0.950);transform-origin:0 0;">Insert</div>
<svg class="a" style="left:956.6px;top:113.5px" width="6" height="3.5" viewBox="0 0 6 3.5"><path d="M0,0 L6,0 L3,3 Z" fill="#d8dce2"/></svg>
<svg class="a" style="left:942px;top:57px;" width="35" height="42" viewBox="0 0 35 42"><path d="M16,1 L28,1 L34,7 L34,25 L16,25Z" fill="#7cc8ff"/><path d="M28,1 L28,7 L34,7Z" fill="#cfe8fa"/><rect x="1.5" y="11.5" width="21" height="15" fill="#6c7380" stroke="#c8ccd2" stroke-width="1.1"/><circle cx="22.5" cy="25.5" r="7" fill="#6c7380" stroke="#c8ccd2" stroke-width="1.1"/></svg>
<div class="t" style="left:1004.5px;top:62.74px;font-size:12px;color:#e4e7ec;transform:scaleX(0.930);transform-origin:0 0;">Create</div>
<div class="t" style="left:1004.5px;top:86.34px;font-size:12px;color:#e4e7ec;transform:scaleX(0.943);transform-origin:0 0;">Edit</div>
<div class="t" style="left:1004.5px;top:110.34px;font-size:12px;color:#e4e7ec;">Edit Attributes</div>
<svg class="a" style="left:1086.0px;top:114.5px" width="6" height="3.5" viewBox="0 0 6 3.5"><path d="M0,0 L6,0 L3,3 Z" fill="#d8dce2"/></svg>
<svg class="a" style="left:982px;top:61px;" width="17" height="17" viewBox="0 0 17 17"><rect x="1" y="7" width="10" height="8" fill="#6c7380" stroke="#c8ccd2" stroke-width="1"/><circle cx="10.5" cy="13" r="3.3" fill="#6c7380" stroke="#c8ccd2" stroke-width="1"/><path d="M12,0 L13,3.5 L16.5,3 L14,5.5 L16,8.5 L12.5,7.5 L11,10.5 L10.5,7 L7.5,6.5 L10.5,4.5Z" fill="#f4dc58"/></svg>
<svg class="a" style="left:982px;top:85px;" width="17" height="17" viewBox="0 0 17 17"><rect x="1" y="7" width="10" height="8" fill="#6c7380" stroke="#c8ccd2" stroke-width="1"/><circle cx="10.5" cy="13" r="3.3" fill="#6c7380" stroke="#c8ccd2" stroke-width="1"/><path d="M8,8 L14,2 L16.5,4.5 L10.5,10.5Z" fill="#f2c070"/><path d="M14,2 L15.5,0.5 L17,2 L16.5,4.5Z" fill="#e8404a"/></svg>
<svg class="a" style="left:982px;top:109px;" width="17" height="17" viewBox="0 0 17 17"><path d="M1,4 L5,1 L9,1 L9,6 L15,12 L10,16Z" fill="#e8eaee"/><path d="M7,11 L13,5 L15.5,7.5 L9.5,13.5Z" fill="#f2c070"/><path d="M13,5 L14.5,3 L17,5.5 L15.5,7.5Z" fill="#e8404a"/></svg>
<div class="t" style="left:1114.5px;top:96.34px;font-size:12px;color:#e4e7ec;">Match</div>
<div class="t" style="left:1104.5px;top:110.84px;font-size:12px;color:#e4e7ec;transform:scaleX(0.960);transform-origin:0 0;">Properties</div>
<svg class="a" style="left:1115px;top:59px;" width="33" height="35" viewBox="0 0 33 35"><rect x="0.9" y="0.7" width="20.2" height="28.2" fill="#d8dadd"/><rect x="3.2" y="3.2" width="13.4" height="10.6" fill="#88c8f4" stroke="#1c2a3a" stroke-width="1.3"/><path d="M3.5,19.4 L15.5,19.4 M3.5,24.4 L12,24.4" stroke="#555" stroke-width="0.9"/><rect x="7" y="16.8" width="2.2" height="5" fill="#555"/><rect x="11" y="21.8" width="2.2" height="5" fill="#555"/><path d="M15,26 L20,21 L27,28 L22,33Z" fill="#f4d470" stroke="#222" stroke-width="0.8"/><path d="M20,21 L23,18 L27,21 L29,19 L32,23 L30,25 L32,28 L29,31 L27,28Z" fill="#eef0f4"/></svg>
<svg class="a" style="left:1162px;top:61px;" width="17" height="17" viewBox="0 0 17 17"><circle cx="8.5" cy="8.5" r="8" fill="#e8504a"/><path d="M8.5,8.5 L8.5,0.5 A8,8 0 0 1 16.5,8.5Z" fill="#f4a040"/><path d="M8.5,8.5 L16.5,8.5 A8,8 0 0 1 8.5,16.5Z" fill="#40b860"/><path d="M8.5,8.5 L8.5,16.5 A8,8 0 0 1 0.5,8.5Z" fill="#4080e0"/><path d="M8.5,8.5 L0.5,8.5 A8,8 0 0 1 4,2Z" fill="#c040c0"/></svg>
<svg class="a" style="left:1162px;top:85px;" width="17" height="16" viewBox="0 0 17 16"><rect x="0" y="1" width="17" height="2.5" fill="#e8eaee"/><rect x="0" y="6" width="17" height="2.5" fill="#e8eaee"/><rect x="0" y="11" width="17" height="3.5" fill="#e8eaee"/></svg>
<svg class="a" style="left:1162px;top:109px;" width="17" height="16" viewBox="0 0 17 16"><path d="M0,2 L17,2 M0,6 L17,6 M0,10 L17,10 M0,14 L17,14" stroke="#e8eaee" stroke-width="1.2" stroke-dasharray="2.5 1"/></svg>
<div class="a" style="left:1182px;top:58.5px;width:178px;height:21px;background:#4b5362;border:1px solid #2b313b;"></div>
<svg class="a" style="left:1350.5px;top:67.0px" width="7.0" height="4.0" viewBox="0 0 7.0 4.0"><path d="M0,0 L7.0,0 L3.5,3.5 Z" fill="#d8dce2"/></svg>
<div class="a" style="left:1182px;top:82.5px;width:178px;height:21px;background:#4b5362;border:1px solid #2b313b;"></div>
<svg class="a" style="left:1350.5px;top:91.0px" width="7.0" height="4.0" viewBox="0 0 7.0 4.0"><path d="M0,0 L7.0,0 L3.5,3.5 Z" fill="#d8dce2"/></svg>
<div class="a" style="left:1182px;top:106.5px;width:178px;height:21px;background:#4b5362;border:1px solid #2b313b;"></div>
<svg class="a" style="left:1350.5px;top:115.0px" width="7.0" height="4.0" viewBox="0 0 7.0 4.0"><path d="M0,0 L7.0,0 L3.5,3.5 Z" fill="#d8dce2"/></svg>
<div class="a" style="left:1188px;top:62px;width:15px;height:14px;background:#ffffff;"></div>
<div class="t" style="left:1208.5px;top:63.34px;font-size:12px;color:#e4e7ec;transform:scaleX(0.943);transform-origin:0 0;">ByLayer</div>
<div class="a" style="left:1188px;top:92px;width:64px;height:1px;background:#e8eaee;"></div>
<div class="t" style="left:1254.5px;top:86.84px;font-size:12px;color:#e4e7ec;transform:scaleX(0.943);transform-origin:0 0;">ByLayer</div>
<div class="a" style="left:1188px;top:116px;width:64px;height:1px;background:#e8eaee;"></div>
<div class="t" style="left:1254.5px;top:110.84px;font-size:12px;color:#e4e7ec;transform:scaleX(0.943);transform-origin:0 0;">ByLayer</div>
<div class="t" style="left:1369.0px;top:96.34px;font-size:12px;color:#e4e7ec;transform:scaleX(0.975);transform-origin:0 0;">Group</div>
<svg class="a" style="left:1367px;top:59px;" width="34" height="34" viewBox="0 0 34 34"><path d="M5.5,6.5 L2.5,6.5 L2.5,32.5 L5.5,32.5 M21,16.5 L24,16.5 L24,32.5 L21,32.5" stroke="#f0f2f4" stroke-width="1.2" fill="none"/><rect x="8.5" y="9.5" width="9.5" height="7.5" fill="#3a70b8" stroke="#6cb0e8" stroke-width="0.9"/><circle cx="13" cy="25" r="4.8" fill="#6c7380" stroke="#c8ccd2" stroke-width="0.9"/><path d="M25.5,1.5 L27,6.5 L31.5,4 L29.5,8.5 L33.5,10 L29.5,11.5 L31.5,16 L27,13.5 L25.5,18 L24,13.5 L19.5,16 L21.5,11.5 L17.5,10 L21.5,8.5 L19.5,4 L24,6.5Z" fill="#f6c45a"/></svg>
<svg class="a" style="left:1410px;top:61px;" width="17" height="17" viewBox="0 0 17 17"><path d="M3,1 L1,1 L1,16 L3,16 M13,1 L15,1 L15,4" stroke="#dfe3e8" stroke-width="1.1" fill="none"/><rect x="4" y="3" width="6" height="4" fill="#6c7380" stroke="#c8ccd2" stroke-width="0.8"/><circle cx="7" cy="12" r="2.5" fill="#6c7380" stroke="#c8ccd2" stroke-width="0.8"/><path d="M11,9 L16,14 M16,9 L11,14" stroke="#e8404a" stroke-width="1.6"/></svg>
<svg class="a" style="left:1410px;top:85px;" width="17" height="17" viewBox="0 0 17 17"><path d="M3,1 L1,1 L1,16 L3,16 M13,1 L15,1 L15,5" stroke="#dfe3e8" stroke-width="1.1" fill="none"/><rect x="4" y="3" width="6" height="4" fill="#6c7380" stroke="#c8ccd2" stroke-width="0.8"/><circle cx="7" cy="12" r="2.5" fill="#6c7380" stroke="#c8ccd2" stroke-width="0.8"/><path d="M9,15 L14,10 L16,12 L11,17Z" fill="#f2c070"/></svg>
<div class="a" style="left:1406px;top:106px;width:24px;height:22px;background:#3a4858;border:1px solid #5aaee8;"></div>
<svg class="a" style="left:1410px;top:109px;" width="17" height="17" viewBox="0 0 17 17"><path d="M3,1 L1,1 L1,16 L3,16 M13,1 L15,1 L15,5" stroke="#dfe3e8" stroke-width="1.1" fill="none"/><rect x="4" y="3" width="6" height="4" fill="#40b070" stroke="#c8ccd2" stroke-width="0.8"/><circle cx="7" cy="12" r="2.5" fill="#40b070" stroke="#c8ccd2" stroke-width="0.8"/><path d="M10,7 L10,17 L12.5,14.5 L14.5,18 L16,17 L14,13.5 L17,13.5Z" fill="#ffffff" stroke="#222" stroke-width="0.5"/></svg>
<div class="t" style="left:1446.0px;top:95.84px;font-size:12px;color:#e4e7ec;transform:scaleX(0.964);transform-origin:0 0;">Measure</div>
<svg class="a" style="left:1465.5px;top:113.5px" width="6" height="3.5" viewBox="0 0 6 3.5"><path d="M0,0 L6,0 L3,3 Z" fill="#d8dce2"/></svg>
<svg class="a" style="left:1454px;top:71px;" width="29" height="9" viewBox="0 0 29 9"><rect x="0" y="2" width="29" height="6" fill="#f0c050"/><path d="M3,2 L3,5 M6,2 L6,4 M9,2 L9,5 M12,2 L12,4 M15,2 L15,5 M18,2 L18,4 M21,2 L21,5 M24,2 L24,4 M27,2 L27,5" stroke="#8a6a20" stroke-width="0.8"/></svg>
<svg class="a" style="left:1506px;top:61px;" width="18" height="17" viewBox="0 0 18 17"><path d="M1,4 L1,15 L4,12 L6,16 L8,15 L6,11 L9.5,11Z" fill="#ffffff"/><rect x="9" y="7" width="8" height="9" fill="#5fb0e6"/><path d="M10.5,9.5 L15.5,9.5 M10.5,12 L15.5,12 M10.5,14.5 L15.5,14.5" stroke="#fff" stroke-width="0.8"/><path d="M7,0 L5,4 L8,4 L6,8" stroke="#f4dc58" stroke-width="1.2" fill="none"/></svg>
<svg class="a" style="left:1506px;top:85px;" width="18" height="18" viewBox="0 0 18 18"><rect x="1" y="1" width="14" height="14" stroke="#3ab070" stroke-width="1.2" fill="none" stroke-dasharray="2 1"/><path d="M4,4 L4,12 L12,12 L12,8 L8,8 L8,4Z" fill="#40b070" stroke="#c8ccd2" stroke-width="0.8"/><path d="M10,8 L10,18 L12.5,15.5 L14.5,19 L16,18 L14,14.5 L17,14.5Z" fill="#ffffff" stroke="#222" stroke-width="0.5"/></svg>
<svg class="a" style="left:1508px;top:109px;" width="14" height="18" viewBox="0 0 14 18"><rect x="1" y="1" width="12" height="16" fill="#c8ccd2"/><rect x="3" y="3" width="8" height="3" fill="#3a4351"/><path d="M3,8.5 L5,8.5 M6,8.5 L8,8.5 M9,8.5 L11,8.5 M3,11.5 L5,11.5 M6,11.5 L8,11.5 M9,11.5 L11,11.5 M3,14.5 L5,14.5 M6,14.5 L8,14.5 M9,14.5 L11,14.5" stroke="#3a4351" stroke-width="1.6"/></svg>
<div class="t" style="left:1543.0px;top:95.84px;font-size:12px;color:#e4e7ec;transform:scaleX(0.913);transform-origin:0 0;">Paste</div>
<svg class="a" style="left:1554.0px;top:113.5px" width="6" height="3.5" viewBox="0 0 6 3.5"><path d="M0,0 L6,0 L3,3 Z" fill="#d8dce2"/></svg>
<svg class="a" style="left:1543px;top:59px;" width="28" height="34" viewBox="0 0 28 34"><rect x="1" y="4" width="20" height="24" fill="#d8a060"/><rect x="6" y="1" width="10" height="5" fill="#e8eaee"/><path d="M8,12 L20,12 L26,18 L26,33 L8,33Z" fill="#d8dbe0"/><path d="M20,12 L20,18 L26,18Z" fill="#ffffff"/></svg>
<svg class="a" style="left:1586px;top:60px;" width="18" height="18" viewBox="0 0 18 18"><rect x="1" y="1" width="11" height="13" fill="#c8ccd2"/><path d="M3,4 L10,4 M3,7 L10,7 M3,10 L8,10" stroke="#3a4351" stroke-width="1"/><circle cx="10" cy="15" r="2.2" stroke="#e8eaee" stroke-width="1.1" fill="none"/><circle cx="15" cy="15" r="2.2" stroke="#e8eaee" stroke-width="1.1" fill="none"/><path d="M10.5,13 L16,6 M14.5,13 L9,6" stroke="#e8eaee" stroke-width="1.1"/></svg>
<svg class="a" style="left:1607.5px;top:67.0px" width="6" height="3.5" viewBox="0 0 6 3.5"><path d="M0,0 L6,0 L3,3 Z" fill="#d8dce2"/></svg>
<svg class="a" style="left:1587px;top:84px;" width="16" height="18" viewBox="0 0 16 18"><path d="M1,1 L8,1 L8,13 L1,13Z" fill="#c8ccd2"/><path d="M5,4 L11,4 L15,8 L15,17 L5,17Z" fill="#e0e3e8" stroke="#3a4351" stroke-width="0.8"/></svg>
<svg class="a" style="left:1607.5px;top:91.0px" width="6" height="3.5" viewBox="0 0 6 3.5"><path d="M0,0 L6,0 L3,3 Z" fill="#d8dce2"/></svg>
<div class="t" style="left:1640.0px;top:95.84px;font-size:12px;color:#e4e7ec;transform:scaleX(0.878);transform-origin:0 0;">Base</div>
<svg class="a" style="left:1649.0px;top:113.5px" width="6" height="3.5" viewBox="0 0 6 3.5"><path d="M0,0 L6,0 L3,3 Z" fill="#d8dce2"/></svg>
<svg class="a" style="left:1635px;top:64px;" width="33" height="24" viewBox="0 0 33 24"><path d="M0,0 L14,0 L14,10 L32,10 L32,24 L0,24Z" fill="#dcdee2"/></svg>
<svg class="a" style="left:14px;top:2px;" width="26" height="23" viewBox="0 0 26 23"><defs><linearGradient id="lg1" x1="0" y1="0" x2="1" y2="1"><stop offset="0" stop-color="#f0507a"/><stop offset="1" stop-color="#c8103c"/></linearGradient></defs><path d="M4,1 L23,1 Q25,1 25,3 L25,19 Q25,22 22,22 L3,22 Q1,22 1,20 L1,4Z" fill="#dc1446"/><path d="M1,4 L4,1 L4,20 L1,22Z" fill="#f06890"/><path d="M1,21 L3,19 L23,19 L25,21 L22,22.5 L3,22.5Z" fill="#b00c34"/><path d="M9.5,16 L12.5,6 L15.5,6 L18.5,16 L16,16 L15.3,13.5 L12.7,13.5 L12,16Z M13.2,11.5 L14.8,11.5 L14,8.3Z" fill="#ffffff" fill-rule="evenodd"/></svg>
<svg class="a" style="left:42px;top:12px;" width="8" height="5" viewBox="0 0 8 5"><path d="M0,0 L8,0 L4,4.5Z" fill="#c8ccd2"/></svg>
<svg class="a" style="left:61px;top:7px;" width="17" height="14" viewBox="0 0 17 14"><path d="M0.5,1 L11,1 L16,6 L16,13 L0.5,13Z" fill="#d8dadd"/><path d="M11,1 L11,6 L16,6Z" fill="#ffffff"/></svg>
<svg class="a" style="left:84px;top:8px;" width="18" height="14" viewBox="0 0 18 14"><path d="M1,1 L6,1 L7.5,3 L13,3 L13,6 L4.5,6 L1,13Z" fill="#c8cacd"/><path d="M4.5,6 L17.5,6 L14,13 L1,13Z" fill="#dcdee1"/></svg>
<svg class="a" style="left:108px;top:5px;" width="18" height="18" viewBox="0 0 18 18"><path d="M1,1 L17,1 L17,17 L1,17Z" fill="#c8cacd"/><rect x="4" y="2" width="10" height="5" fill="#eef0f2"/><rect x="4" y="11" width="10" height="6" fill="#eef0f2"/><rect x="5.5" y="12.5" width="1.5" height="3" fill="#333"/></svg>
<svg class="a" style="left:132px;top:5px;" width="19" height="19" viewBox="0 0 19 19"><path d="M1,1 L15,1 L15,10 L10,17 L1,17Z" fill="#c8cacd"/><rect x="4" y="2" width="9" height="5" fill="#eef0f2"/><rect x="4" y="11" width="4" height="6" fill="#eef0f2"/><path d="M9,16 L16,8 L18.5,10.5 L11.5,18.5Z" fill="#f4d070"/><path d="M16,8 L17,7 L19,9 L18.5,10.5Z" fill="#e8607a"/></svg>
<svg class="a" style="left:157px;top:5px;" width="19" height="19" viewBox="0 0 19 19"><rect x="1" y="1" width="10" height="16" rx="1" fill="#e8eaee"/><rect x="2.5" y="2.5" width="7" height="12" fill="#6e7070"/><path d="M8,11 L11,11 L12,12.5 L17,12.5 L17,18 L8,18Z" fill="#eef0f2"/><path d="M9,14 L18.5,14 L17,18.5 L8,18.5Z" fill="#f4c860"/></svg>
<svg class="a" style="left:181px;top:5px;" width="16" height="19" viewBox="0 0 16 19"><rect x="3" y="1" width="11" height="16" rx="1" fill="#e8eaee"/><rect x="4.5" y="2.5" width="8" height="12" fill="#6e7070"/><path d="M0,7.5 L5,7.5 L5,5 L9,8.5 L5,12 L5,9.5 L0,9.5Z" fill="#6ec0f4"/></svg>
<svg class="a" style="left:204px;top:5px;" width="18" height="18" viewBox="0 0 18 18"><rect x="4" y="1" width="10" height="5" fill="#eef0f2"/><rect x="1" y="5" width="16" height="8" fill="#e0e2e6"/><rect x="4" y="10" width="10" height="7" fill="#eef0f2"/><rect x="5" y="11.5" width="8" height="4" fill="#7cc4f4"/></svg>
<svg class="a" style="left:228px;top:8px;" width="18" height="11" viewBox="0 0 18 11"><path d="M0.5,5 L6,0.5 L6,3.5 L10,3.5 Q16,3.5 17,10 Q14,6.5 10,6.5 L6,6.5 L6,9.5Z" fill="#e0e2e6"/></svg>
<svg class="a" style="left:251px;top:12px;" width="7" height="5" viewBox="0 0 7 5"><path d="M0,0 L7,0 L3.5,4Z" fill="#c8ccd2"/></svg>
<svg class="a" style="left:264px;top:8px;" width="17" height="11" viewBox="0 0 17 11"><path d="M16.5,5 L11,0.5 L11,3.5 L7,3.5 Q1,3.5 0,10 Q3,6.5 7,6.5 L11,6.5 L11,9.5Z" fill="#6e747e"/></svg>
<svg class="a" style="left:287px;top:12px;" width="7" height="5" viewBox="0 0 7 5"><path d="M0,0 L7,0 L3.5,4Z" fill="#8a9099"/></svg>
<svg class="a" style="left:300px;top:9px;" width="10" height="9" viewBox="0 0 10 9"><path d="M0.5,0.5 L9.5,0.5 M0.5,2.5 L9.5,2.5" stroke="#e0e2e6" stroke-width="1.2"/><path d="M0.5,4 L9.5,4 L5,8.5Z" fill="#e0e2e6"/></svg>
<svg class="a" style="left:316px;top:6px;" width="18" height="16" viewBox="0 0 18 16"><path d="M17.5,0.5 L0.5,8 L5,9 Z" fill="#6cc4f4"/><path d="M17.5,0.5 L5,9 L6,15.5 Z" fill="#5ab0e8"/><path d="M17.5,0.5 L9,10.5 L15,13.5Z" fill="#8cd4f8"/></svg>
<div class="t" style="left:338.3px;top:7.74px;font-size:12px;color:#9fd2f2;transform:scaleX(0.896);transform-origin:0 0;">Share</div>
<svg class="a" style="left:1449px;top:6px;" width="16" height="16" viewBox="0 0 16 16"><circle cx="6.5" cy="6.5" r="5" stroke="#d8dadd" stroke-width="1.5" fill="#555a62"/><path d="M10,10 L14.5,14.5" stroke="#d8dadd" stroke-width="1.8"/></svg>
<svg class="a" style="left:1472px;top:6px;" width="17" height="16" viewBox="0 0 17 16"><circle cx="8.5" cy="4.5" r="4.2" fill="#6ec0f4"/><path d="M0.5,15.5 Q1,8.5 8.5,8.5 Q16,8.5 16.5,15.5Z" fill="#6ec0f4"/></svg>
<div class="t" style="left:1494.3px;top:8.34px;font-size:12px;color:#e4e7ec;transform:scaleX(1.028);transform-origin:0 0;">mimarlucky</div>
<svg class="a" style="left:1577.5px;top:13.0px" width="7.0" height="4.0" viewBox="0 0 7.0 4.0"><path d="M0,0 L7.0,0 L3.5,3.5 Z" fill="#c8ccd2"/></svg>
<svg class="a" style="left:1596px;top:6px;" width="14" height="16" viewBox="0 0 14 16"><path d="M0.5,1.5 L3,1.5 L5,10.5 L12,10.5 L13.5,4 L3.8,4" stroke="#d0d4d8" stroke-width="1.3" fill="none"/><rect x="5" y="5" width="7" height="4" fill="#8a9099"/><circle cx="5.5" cy="13.5" r="1.5" fill="#d0d4d8"/><circle cx="11" cy="13.5" r="1.5" fill="#d0d4d8"/></svg>
<svg class="a" style="left:1618px;top:6px;" width="18" height="16" viewBox="0 0 18 16"><path d="M9,2 L2.5,13.5 M9,2 L15.5,13.5 M4,12 L14,12" stroke="#e0e2e6" stroke-width="2.4" fill="none" stroke-linecap="round"/><circle cx="9" cy="2.5" r="2.3" fill="#e0e2e6"/><circle cx="2.5" cy="13" r="2.3" fill="#e0e2e6"/><circle cx="15.5" cy="13" r="2.3" fill="#e0e2e6"/></svg>
<svg class="a" style="left:1639.2px;top:13.0px" width="7.0" height="4.0" viewBox="0 0 7.0 4.0"><path d="M0,0 L7.0,0 L3.5,3.5 Z" fill="#c8ccd2"/></svg>
<div class="a" style="left:1655px;top:5px;width:1px;height:18px;background:#3e4550;"></div>
<svg class="a" style="left:1664px;top:5px;" width="18" height="18" viewBox="0 0 18 18"><circle cx="9" cy="9" r="8.5" fill="#d4d7db"/><text x="9" y="13.5" font-family="Liberation Sans" font-size="13" text-anchor="middle" fill="#6a6e74">?</text></svg>
<svg class="a" style="left:1687.0px;top:13.0px" width="7.0" height="4.0" viewBox="0 0 7.0 4.0"><path d="M0,0 L7.0,0 L3.5,3.5 Z" fill="#c8ccd2"/></svg>
<svg class="a" style="left:1701px;top:5px;" width="17" height="17" viewBox="0 0 17 17"><path d="M8.5,0.5 A8,8 0 1 0 8.5,16.5 L16.5,16.5 L16.5,8.5 A8,8 0 0 0 8.5,0.5Z" fill="#d4d7db"/><path d="M3,10 L12,5 M4,12 L13,7 M5,14 L14,9" stroke="#8a8e94" stroke-width="0.8"/></svg>
<div class="a" style="left:1800px;top:13px;width:10px;height:1px;background:#e8eaee;"></div>
<svg class="a" style="left:1845px;top:8px;" width="13" height="13" viewBox="0 0 13 13"><rect x="1" y="3.5" width="8.5" height="8.5" rx="1" stroke="#e8eaee" stroke-width="1" fill="none"/><path d="M3.5,1.5 Q3.5,1 4,1 L11,1 Q12,1 12,2 L12,9 Q12,9.5 11.5,9.5" stroke="#e8eaee" stroke-width="1" fill="none"/></svg>
<svg class="a" style="left:1891px;top:8px;" width="12" height="12" viewBox="0 0 12 12"><path d="M1,1 L11,11 M11,1 L1,11" stroke="#e8eaee" stroke-width="1.1"/></svg>
<div class="a" style="left:16px;top:160px;width:16px;height:2px;background:#e8eaee;"></div>
<div class="a" style="left:16px;top:165px;width:16px;height:2px;background:#e8eaee;"></div>
<div class="a" style="left:16px;top:170px;width:16px;height:2px;background:#e8eaee;"></div>
<svg class="a" style="left:42px;top:158px;" width="8" height="16" viewBox="0 0 8 16"><path d="M6,1 L2,15" stroke="#4a515c" stroke-width="1"/></svg>
<div class="t" style="left:58.0px;top:160.34px;font-size:12px;color:#e4e7ec;transform:scaleX(0.948);transform-origin:0 0;">Start</div>
<svg class="a" style="left:90px;top:158px;" width="8" height="16" viewBox="0 0 8 16"><path d="M6,1 L2,15" stroke="#4a515c" stroke-width="1"/></svg>
<div class="t" style="left:106.0px;top:160.34px;font-size:12px;color:#e4e7ec;">Keman (PislikMimar.com)*</div>
<svg class="a" style="left:266px;top:154px;" width="242" height="24" viewBox="0 0 242 24"><path d="M13,0.5 L240,0.5 L233,24 L1,24Z" fill="#373e4a"/></svg>
<div class="t" style="left:284.2px;top:159.84px;font-size:12px;color:#f2f4f6;font-weight:bold;transform:scaleX(0.959);transform-origin:0 0;">Ayakkabı Dolabı (PislikMimar.com)*</div>
<svg class="a" style="left:486px;top:161px;" width="10" height="10" viewBox="0 0 10 10"><path d="M1,1 L9,9 M9,1 L1,9" stroke="#9aa0a8" stroke-width="1.6"/></svg>
<svg class="a" style="left:515px;top:158px;" width="16" height="16" viewBox="0 0 16 16"><path d="M8,1 L8,15 M1,8 L15,8" stroke="#e8eaee" stroke-width="1.6"/></svg>
<svg class="a" style="left:539px;top:158px;" width="8" height="16" viewBox="0 0 8 16"><path d="M6,1 L2,15" stroke="#4a515c" stroke-width="1"/></svg>
<div class="a" style="left:0px;top:1011px;width:1920px;height:29px;background:#242a33;"></div>
<div class="a" style="left:16px;top:1017px;width:16px;height:2px;background:#e8eaee;"></div>
<div class="a" style="left:16px;top:1022px;width:16px;height:2px;background:#e8eaee;"></div>
<div class="a" style="left:16px;top:1027px;width:16px;height:2px;background:#e8eaee;"></div>
<svg class="a" style="left:41px;top:1013px;" width="8" height="18" viewBox="0 0 8 18"><path d="M6,1 L2,17" stroke="#4a515c" stroke-width="1"/></svg>
<div class="t" style="left:58.3px;top:1017.44px;font-size:12px;color:#e4e7ec;transform:scaleX(1.028);transform-origin:0 0;">Model</div>
<svg class="a" style="left:100px;top:1011px;" width="124" height="24" viewBox="0 0 124 24"><path d="M8,0.5 L122.5,0.5 L114,23 L0.5,23Z" fill="#383f4b"/></svg>
<div class="t" style="left:116.7px;top:1017.44px;font-size:12px;color:#f2f4f6;font-weight:bold;transform:scaleX(0.947);transform-origin:0 0;">PislikMimar.com</div>
<svg class="a" style="left:231px;top:1016px;" width="16" height="15" viewBox="0 0 16 15"><path d="M8,0 L8,15 M0.5,7.5 L15.5,7.5" stroke="#e8eaee" stroke-width="1.7"/></svg>
<svg class="a" style="left:256px;top:1013px;" width="8" height="18" viewBox="0 0 8 18"><path d="M6,1 L2,17" stroke="#4a515c" stroke-width="1"/></svg>
<div class="a" style="left:1431px;top:1012.5px;width:39px;height:24px;background:#323944;"></div>
<div class="a" style="left:1497px;top:1012.5px;width:81px;height:24px;background:#323944;"></div>
<div class="a" style="left:1626px;top:1012.5px;width:17px;height:24px;background:#323944;"></div>
<div class="a" style="left:1645px;top:1012.5px;width:73px;height:24px;background:#323944;"></div>
<div class="a" style="left:1720.5px;top:1012.5px;width:40.5px;height:24px;background:#323944;"></div>
<div class="a" style="left:1762px;top:1012.5px;width:24px;height:24px;background:#323944;"></div>
<div class="a" style="left:1789.5px;top:1012.5px;width:23.5px;height:24px;background:#323944;"></div>
<div class="a" style="left:1815.5px;top:1012.5px;width:49.5px;height:24px;background:#323944;"></div>
<div class="a" style="left:1868px;top:1012.5px;width:24px;height:24px;background:#323944;"></div>
<div class="a" style="left:1893.5px;top:1012.5px;width:24.0px;height:24px;background:#323944;"></div>
<div class="t" style="left:1434.6px;top:1018.84px;font-size:12px;color:#e4e7ec;transform:scaleX(0.842);transform-origin:0 0;">PAPER</div>
<div class="a" style="left:1474.7px;top:1013.5px;width:22.3px;height:22.5px;background:#5a8fc8;"></div>
<div class="a" style="left:1579.8px;top:1013.5px;width:22.2px;height:22.5px;background:#5a8fc8;"></div>
<div class="a" style="left:1603.8px;top:1013.5px;width:22.2px;height:22.5px;background:#5a8fc8;"></div>
<svg class="a" style="left:1477px;top:1016px;" width="18" height="18" viewBox="0 0 18 18"><path d="M3,1 L3,15.5 L16,15.5" stroke="#f0f2f4" stroke-width="1.3" fill="none"/><rect x="3" y="10" width="5" height="5.5" stroke="#f0f2f4" stroke-width="1.1" fill="none"/></svg>
<svg class="a" style="left:1501px;top:1016px;" width="18" height="18" viewBox="0 0 18 18"><circle cx="7.5" cy="10" r="6" stroke="#e0e3e8" stroke-width="1.2" fill="none"/><path d="M7.5,10 L15,2 M7.5,10 L17,10" stroke="#e0e3e8" stroke-width="1.2"/></svg>
<svg class="a" style="left:1526.0px;top:1022.0px" width="7.0" height="4.0" viewBox="0 0 7.0 4.0"><path d="M0,0 L7.0,0 L3.5,3.5 Z" fill="#d8dce2"/></svg>
<svg class="a" style="left:1540px;top:1015px;" width="16" height="18" viewBox="0 0 16 18"><path d="M8.5,0.5 L8.5,17" stroke="#40c080" stroke-width="1.2"/><path d="M1,1 L14,16" stroke="#c05060" stroke-width="1.2"/><circle cx="8.5" cy="9" r="1.8" fill="#e0e3e8"/></svg>
<svg class="a" style="left:1566.5px;top:1022.0px" width="7.0" height="4.0" viewBox="0 0 7.0 4.0"><path d="M0,0 L7.0,0 L3.5,3.5 Z" fill="#d8dce2"/></svg>
<svg class="a" style="left:1582px;top:1016px;" width="18" height="18" viewBox="0 0 18 18"><path d="M2,15.5 L16,15.5 M2,15.5 L13,4" stroke="#f0f2f4" stroke-width="1.3" fill="none"/><rect x="7" y="7.5" width="4" height="4" fill="#f0f2f4"/></svg>
<svg class="a" style="left:1606px;top:1016px;" width="18" height="18" viewBox="0 0 18 18"><rect x="2.5" y="1.5" width="4" height="4" stroke="#f0f2f4" stroke-width="1.2" fill="none"/><path d="M8,3.5 L15.5,3.5 L15.5,16 L4.5,16 L4.5,7" stroke="#f0f2f4" stroke-width="1.3" fill="none"/></svg>
<svg class="a" style="left:1630.5px;top:1022.0px" width="7.0" height="4.0" viewBox="0 0 7.0 4.0"><path d="M0,0 L7.0,0 L3.5,3.5 Z" fill="#d8dce2"/></svg>
<svg class="a" style="left:1649px;top:1016px;" width="18" height="18" viewBox="0 0 18 18"><path d="M1,6 L1,1 L6,1 M11,1 L16,1 L16,6 M1,11 L1,16 L6,16 M11,16 L16,16 L16,11" stroke="#e0e3e8" stroke-width="1.2" fill="none" stroke-dasharray="2.5 1.5"/><rect x="6" y="6" width="6" height="6" stroke="#e0e3e8" stroke-width="1.2" fill="none"/><path d="M2,2 L6,6" stroke="#e0e3e8" stroke-width="1.2"/></svg>
<svg class="a" style="left:1673px;top:1015px;" width="18" height="18" viewBox="0 0 18 18"><path d="M8,1 L14,16 L8,12 L2,16Z" fill="#dcdfe4"/><circle cx="14.5" cy="3.5" r="2.3" stroke="#dcdfe4" stroke-width="1.1" fill="none"/></svg>
<svg class="a" style="left:1697px;top:1016px;" width="18" height="18" viewBox="0 0 18 18"><path d="M8,1 L14,16 L8,12 L2,16Z" fill="#dcdfe4"/><path d="M14,0 L11,5 L14,5 L11.5,9" stroke="#dcdfe4" stroke-width="1.2" fill="none"/></svg>
<svg class="a" style="left:1724px;top:1016px;" width="17" height="17" viewBox="0 0 17 17"><circle cx="8.5" cy="8.5" r="5.5" fill="#d4d7dc"/><circle cx="8.5" cy="8.5" r="2.2" fill="#323944"/><path d="M8.5,0.5 L8.5,16.5 M0.5,8.5 L16.5,8.5 M2.8,2.8 L14.2,14.2 M2.8,14.2 L14.2,2.8" stroke="#d4d7dc" stroke-width="2.6"/><circle cx="8.5" cy="8.5" r="2.2" fill="#323944"/></svg>
<svg class="a" style="left:1749.0px;top:1022.0px" width="7.0" height="4.0" viewBox="0 0 7.0 4.0"><path d="M0,0 L7.0,0 L3.5,3.5 Z" fill="#d8dce2"/></svg>
<svg class="a" style="left:1766px;top:1016px;" width="17" height="17" viewBox="0 0 17 17"><path d="M8.5,0.5 L8.5,16.5 M0.5,8.5 L16.5,8.5" stroke="#e0e3e8" stroke-width="1.6"/></svg>
<svg class="a" style="left:1792px;top:1016px;" width="18" height="18" viewBox="0 0 18 18"><rect x="1" y="1" width="6" height="6" stroke="#dcdfe4" stroke-width="1" fill="none"/><circle cx="13" cy="8" r="3" stroke="#dcdfe4" stroke-width="1" fill="none"/><path d="M6,16 L9,11 L12,16Z" stroke="#dcdfe4" stroke-width="1" fill="none"/></svg>
<svg class="a" style="left:1818px;top:1016px;" width="18" height="18" viewBox="0 0 18 18"><rect x="3" y="2" width="12" height="10" fill="#4a7ac0"/><path d="M1,5 L10,5 M6,0 L6,10" stroke="#ffffff" stroke-width="1"/><circle cx="6" cy="5" r="1.8" stroke="#fff" stroke-width="1" fill="#4a7ac0"/><rect x="2" y="11" width="10" height="4" fill="#f0b840"/><path d="M13,8 L18,17 L8,17Z" fill="#f4d030"/><path d="M13,11 L13,14" stroke="#222" stroke-width="1.2"/></svg>
<svg class="a" style="left:1842px;top:1015px;" width="18" height="19" viewBox="0 0 18 19"><rect x="1" y="2" width="15" height="12" fill="#c8ccd2"/><path d="M2,10 L5,6 L8,9 L11,5 L14,10" stroke="#555" stroke-width="1" fill="none"/><path d="M12,8 L18,18 L6,18Z" fill="#f09850"/><path d="M12,11 L12,15" stroke="#fff" stroke-width="1.2"/></svg>
<svg class="a" style="left:1871px;top:1017px;" width="17" height="15" viewBox="0 0 17 15"><rect x="1" y="1" width="15" height="12" stroke="#e0e3e8" stroke-width="1.2" fill="none"/><path d="M4,10 L7,7 M13,4 L10,7" stroke="#e0e3e8" stroke-width="1.1"/><path d="M3.5,7.5 L3.5,10.5 L6.5,10.5 M10.5,3.5 L13.5,3.5 L13.5,6.5" stroke="#e0e3e8" stroke-width="1.1" fill="none"/></svg>
<div class="a" style="left:1897px;top:1018px;width:16px;height:2px;background:#e8eaee;"></div>
<div class="a" style="left:1897px;top:1024px;width:16px;height:2px;background:#e8eaee;"></div>
<div class="a" style="left:1897px;top:1030px;width:16px;height:2px;background:#e8eaee;"></div>
<div class="a" style="left:0px;top:1040px;width:1920px;height:40px;background:#1d1d1d;"></div>
<svg class="a" style="left:15px;top:1051px;" width="18" height="18" viewBox="0 0 18 18"><path d="M0.5,2.5 L7.5,1.5 L7.5,8.3 L0.5,8.3Z M8.5,1.3 L17.5,0 L17.5,8.3 L8.5,8.3Z M0.5,9.3 L7.5,9.3 L7.5,16 L0.5,15.2Z M8.5,9.3 L17.5,9.3 L17.5,17.5 L8.5,16.2Z" fill="#ffffff"/></svg>
<div class="a" style="left:48px;top:1040px;width:288px;height:40px;background:#f2f2f2;border:1px solid #d8d8d8;border-bottom:none;"></div>
<svg class="a" style="left:59px;top:1051px;" width="18" height="18" viewBox="0 0 18 18"><circle cx="11" cy="6.5" r="5.5" stroke="#222" stroke-width="1.3" fill="none"/><path d="M7,10.5 L1,16.5" stroke="#222" stroke-width="1.5"/></svg>
<div class="t" style="left:88.5px;top:1053.55px;font-size:14px;color:#2a2a2a;transform:scaleX(1.019);transform-origin:0 0;">Ara</div>
<svg class="a" style="left:256px;top:1040px;" width="80" height="40" viewBox="0 0 80 40"><path d="M1,14 Q4,9 9,12 L22,22 L40,26 Q52,30 62,40 L34,40 Q28,34 20,30 L6,22Z" fill="#c98a52"/><path d="M3,14 Q5,11 8,13 L14,19 L8,21Z" fill="#e8b888"/><path d="M66,18 Q70,30 72,40 L68,40 Q66,30 63,22Z" fill="#d8b890"/><ellipse cx="48" cy="19" rx="20" ry="12" fill="#4a4249"/><ellipse cx="50" cy="29" rx="8" ry="9" fill="#5a4a60"/><path d="M26,24 Q40,30 56,26 L54,20 Q40,24 28,20Z" fill="#3e363c"/><circle cx="30" cy="13" r="8.5" fill="#6c6468"/><ellipse cx="32" cy="15" rx="6.5" ry="5.5" fill="#e0dcde"/><ellipse cx="30" cy="16" rx="2" ry="2.5" fill="#777"/><ellipse cx="35" cy="15" rx="2" ry="2.5" fill="#777"/><circle cx="20" cy="10" r="2.5" fill="#222"/><circle cx="33" cy="5" r="2.5" fill="#222"/><path d="M9,4 Q13,8 11,14 Q7,10 9,4Z" fill="#58a838"/><path d="M78,19 Q77,25 73,27 Q73,21 78,19Z" fill="#48b048"/><path d="M12,36 Q18,32 22,36 Q17,40 12,36Z M20,33 Q25,31 28,34 Q24,36 20,33Z" fill="#40a040"/></svg>
<svg class="a" style="left:350px;top:1047px;" width="26" height="26" viewBox="0 0 26 26"><circle cx="13" cy="13" r="12" fill="#e54335"/><path d="M13,13 L2.6,7 A12,12 0 0 0 13,25Z" fill="#34a853"/><path d="M13,13 L13,25 A12,12 0 0 0 23.4,7Z" fill="#fbbc05"/><path d="M13,13 L2.6,7 A12,12 0 0 1 23.4,7Z" fill="#ea4335"/><circle cx="13" cy="13" r="5.5" fill="#ffffff"/><circle cx="13" cy="13" r="4.3" fill="#4285f4"/></svg>
<div class="a" style="left:343px;top:1078px;width:40px;height:2px;background:#76b9ed;"></div>
<div class="a" style="left:388px;top:1040px;width:44px;height:40px;background:#3d3d3d;"></div>
<div class="a" style="left:388px;top:1078px;width:44px;height:2px;background:#76b9ed;"></div>
<svg class="a" style="left:400px;top:1047px;" width="23" height="25" viewBox="0 0 23 25"><path d="M3,1 L21,1 Q22,1 22,2 L22,23 Q22,24 21,24 L3,24 Q1,24 1,22 L1,3Z" fill="#dc1446"/><path d="M1,3 L3,1 L3,24 L1,22Z" fill="#f06890"/><rect x="3" y="17" width="19" height="7" fill="#a80c34"/><path d="M7.5,14 L10.5,4 L13.5,4 L16.5,14 L14,14 L13.3,11.5 L10.7,11.5 L10,14Z M11.2,9.5 L12.8,9.5 L12,6.3Z" fill="#ffffff" fill-rule="evenodd"/><text x="12.5" y="23" font-family="Liberation Sans" font-weight="bold" font-size="5.5" text-anchor="middle" fill="#fff">CAD</text></svg>
<svg class="a" style="left:448px;top:1048px;" width="26" height="24" viewBox="0 0 26 24"><path d="M12,3 Q24,2 24,12 Q24,20 15,21 Q12,21 12,18 Q12,15 9,16 Q2,18 1.5,12 Q1,4 12,3Z" fill="#c8d8e8"/><circle cx="7" cy="12" r="2" fill="#e04848"/><circle cx="10" cy="7" r="2" fill="#40b060"/><circle cx="15" cy="6" r="2" fill="#f0a040"/><circle cx="15" cy="14" r="1.8" fill="#2040a0"/><path d="M12,22 L23,3" stroke="#e89040" stroke-width="2"/><path d="M22,4 L25,0" stroke="#c8a070" stroke-width="3"/></svg>
<div class="a" style="left:441px;top:1078px;width:40px;height:2px;background:#76b9ed;"></div>
<svg class="a" style="left:498px;top:1047px;" width="24" height="25" viewBox="0 0 24 25"><ellipse cx="12" cy="12.5" rx="11.5" ry="12" fill="#e0202a"/><ellipse cx="12" cy="12.5" rx="5.5" ry="9.5" fill="#8a0c14"/><ellipse cx="12" cy="12.5" rx="4.2" ry="8.6" fill="#1d1d1d"/></svg>
<div class="a" style="left:490px;top:1078px;width:40px;height:2px;background:#76b9ed;"></div>
<svg class="a" style="left:1758px;top:1055px;" width="14" height="9" viewBox="0 0 14 9"><path d="M1,8 L7,1.5 L13,8" stroke="#e8e8e8" stroke-width="1.2" fill="none"/></svg>
<svg class="a" style="left:1780px;top:1051px;" width="18" height="16" viewBox="0 0 18 16"><path d="M1,5 L4,5 L8.5,1 L8.5,15 L4,11 L1,11Z" stroke="#e8e8e8" stroke-width="1" fill="none"/><path d="M11,5.5 Q12.5,8 11,10.5 M13.5,3.5 Q16,8 13.5,12.5" stroke="#e8e8e8" stroke-width="1" fill="none"/><path d="M15.5,1.5 Q19,8 15.5,14.5" stroke="#888" stroke-width="1" fill="none"/></svg>
<div class="t" style="left:1821.0px;top:1044.74px;font-size:12px;color:#ffffff;transform:scaleX(0.860);transform-origin:0 0;">15:47</div>
<div class="t" style="left:1807.0px;top:1062.54px;font-size:12px;color:#ffffff;transform:scaleX(0.900);transform-origin:0 0;">28.04.2026</div>
<svg class="a" style="left:1878px;top:1051px;" width="24" height="25" viewBox="0 0 24 25"><path d="M1,1 L17,1 L17,13 L9,13 L6,16 L6,13 L1,13Z" fill="#ffffff"/><path d="M4,4.5 L14,4.5 M4,7.5 L14,7.5 M4,10.5 L11,10.5" stroke="#1d1d1d" stroke-width="1.2"/><circle cx="16.5" cy="16" r="7" fill="#1d1d1d" stroke="#777" stroke-width="1"/><text x="16.5" y="20" font-family="Liberation Sans" font-size="11" text-anchor="middle" fill="#fff">3</text></svg>
<div class="a" style="left:1915px;top:1041px;width:1px;height:39px;background:#555;"></div>
</body></html>
